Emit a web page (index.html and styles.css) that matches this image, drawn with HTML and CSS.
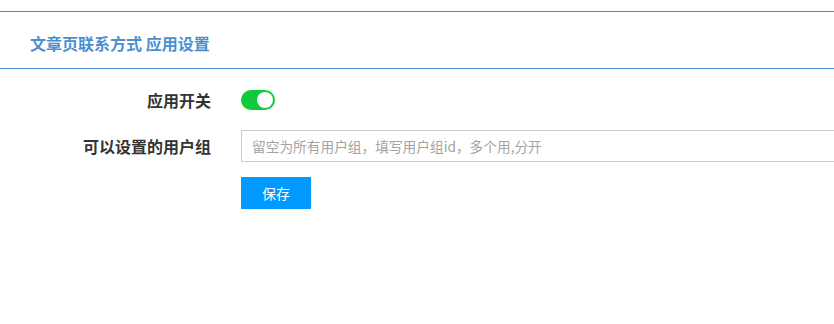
FILE: index.html
```html
<!DOCTYPE html>
<html lang="zh-CN">
<head>
    <meta charset="UTF-8">
    <meta name="viewport" content="width=device-width, initial-scale=1.0">
    <title>应用设置</title>
    <link rel="stylesheet" href="styles.css">
</head>
<body>
    <div class="page">
        <div class="panel">
            <div class="panel-head">
                <h3>文章页联系方式 应用设置</h3>
            </div>

            <!-- Settings Form -->
            <form class="setting-form">
                <div class="form-row">
                    <label class="form-label">应用开关</label>
                    <div class="form-field">
                        <span class="switch on"><span class="knob"></span></span>
                    </div>
                </div>

                <div class="form-row">
                    <label class="form-label" for="groups">可以设置的用户组</label>
                    <div class="form-field wide">
                        <input type="text" id="groups" class="text-input" placeholder="留空为所有用户组，填写用户组id，多个用,分开">
                    </div>
                </div>

                <div class="form-row">
                    <span class="form-label"></span>
                    <div class="form-field">
                        <button type="submit" class="save-btn">保存</button>
                    </div>
                </div>
            </form>
        </div>
    </div>
</body>
</html>
```

FILE: styles.css
```css
body {
    font-family: "Noto Sans CJK SC", "Noto Sans", sans-serif;
    background-color: #fff;
    margin: 0;
    padding: 0;
    overflow: hidden;
}

.page {
    padding-top: 11px;
}

.panel {
    border-top: 1px solid #2a97ee;
}

.panel-head {
    height: 57px;
    box-sizing: border-box;
    padding: 20px 30px 0;
    border-bottom: 1px solid #4a8fd4;
}

.panel-head h3 {
    margin: 0;
    font-size: 16px;
    line-height: 22px;
    font-weight: bold;
    color: #4a8fd0;
}

.setting-form {
    padding-top: 21px;
}

.form-row {
    display: flex;
    align-items: center;
    margin-bottom: 20px;
}

.form-row:nth-child(2) {
    margin-bottom: 15px;
}

.form-label {
    width: 211px;
    flex-shrink: 0;
    text-align: right;
    font-size: 16px;
    line-height: 20px;
    font-weight: bold;
    color: #333;
}

.form-field {
    margin-left: 30px;
    display: flex;
    align-items: center;
}

.form-field.wide {
    flex: 1;
}

.switch {
    display: inline-block;
    width: 34px;
    height: 20px;
    border-radius: 10px;
    background: #0fcb3c;
    position: relative;
}

.switch .knob {
    position: absolute;
    top: 2px;
    right: 2px;
    width: 16px;
    height: 16px;
    border-radius: 50%;
    background: #fff;
}

.text-input {
    flex: 1;
    min-width: 0;
    height: 32px;
    box-sizing: border-box;
    padding: 0 10px;
    border: 1px solid #ccc;
    border-right: none;
    border-radius: 0;
    font-family: inherit;
    font-size: 13.7px;
    color: #333;
    outline: none;
}

.text-input::placeholder {
    color: #a3a3a3;
}

.save-btn {
    width: 70px;
    height: 32px;
    background: #0099ff;
    color: #fff;
    border: none;
    font-family: inherit;
    font-size: 14px;
    cursor: pointer;
}
```
